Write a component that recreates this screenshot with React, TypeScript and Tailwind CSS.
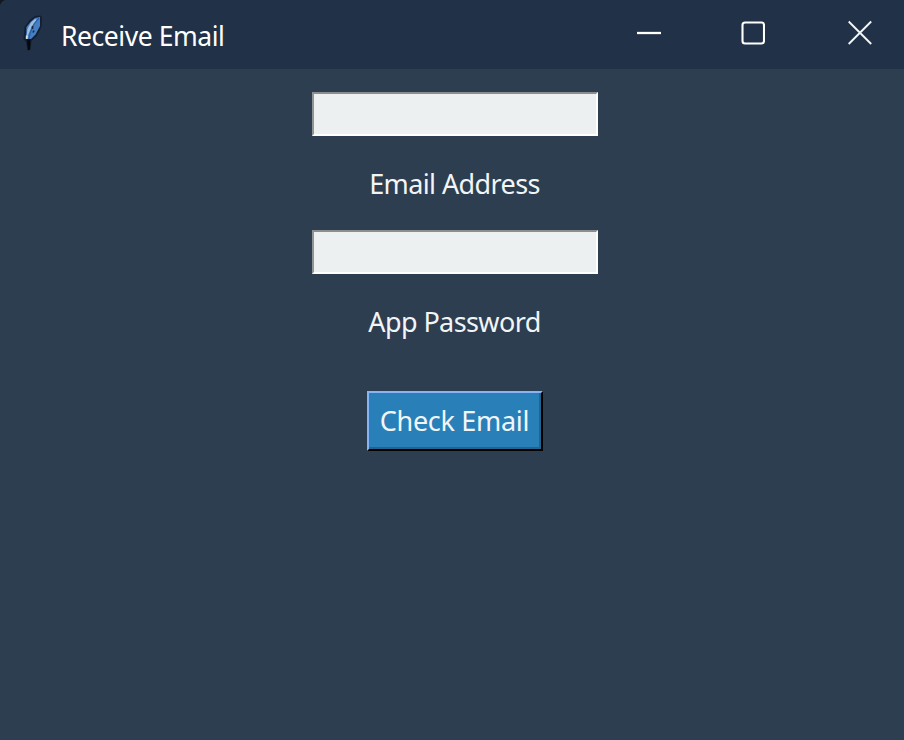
import React from "react";

function Feather() {
  return (
    <svg className="block h-[40px] w-[26px]" viewBox="0 0 26 40" aria-hidden="true">
      <path d="M20.5 2.5 22 4 21.5 14 17 23 11.5 28 10.5 36 7.5 38 6 29 3.5 26 4.5 14 9.5 7 15 3Z" fill="#10192a" opacity="0.75" />
      <path d="M20 4 20 13 15.5 21.5 11 26 6 25.500 6.500 14 10.500 9 15 5Z" fill="#4680c4" />
      <path d="M15 6 11 9.500 7.500 16 6.500 24 8.500 21 12 13 17 7Z" fill="#9dbfe0" />
      <path d="M19 5 14 11 10.5 19 9 25.5" fill="none" stroke="#2b62a5" strokeWidth="1.300" />
      <path d="M12.5 13v3M14 17.500 13 19.500" fill="none" stroke="#152743" strokeWidth="1.600" />
      <path d="M5.800 22.500h2.200l-.3 3.500H5.800Z" fill="#d5dbdf" />
      <path d="M7 26.500h3.500L10 37H8Z" fill="#05080d" />
    </svg>
  );
}

function TitleBar() {
  return (
    <header className="flex h-[69px] shrink-0 justify-between bg-[#213147]">
      <div className="flex pl-5">
        <div className="pt-[13px]">
          <Feather />
        </div>
        <h1 className="pl-[15px] pt-[18px] text-[26.500px] leading-[36px] tracking-[-0.45px] text-white">Receive Email</h1>
      </div>
      <div className="flex pr-[32px] pt-[20px]">
        <button className="mr-[80px] block h-[26px] w-6" aria-label="Minimize">
          <svg className="block" width="24" height="26" viewBox="0 0 24 26">
            <path d="M0 13h24" stroke="#fff" strokeWidth="2.300" />
          </svg>
        </button>
        <button className="mr-[83px] block h-[26px] w-6" aria-label="Maximize">
          <svg className="block" width="24" height="26" viewBox="0 0 24 26">
            <rect x="1.500" y="2.500" width="21.500" height="21" rx="2.500" fill="none" stroke="#fff" strokeWidth="2.100" />
          </svg>
        </button>
        <button className="block h-[26px] w-6" aria-label="Close">
          <svg className="block" width="24" height="26" viewBox="0 0 24 26">
            <path d="M.7 1.500 23.200 24M23.200 1.500 .7 24" stroke="#f4f5f7" strokeWidth="1.900" />
          </svg>
        </button>
      </div>
    </header>
  );
}

function Field({ type, label }: { type: string; label: string }) {
  return (
    <label className="flex h-[138px] flex-col items-center">
      <input
        type={type}
        className="block h-[44px] w-[286px] rounded-none border-2 border-b-white border-l-[#929596] border-r-white border-t-[#8b8d8e] bg-[#ecf0f1] outline-none"
      />
      <span className="mt-[29.500px] whitespace-nowrap pr-px text-[27px] leading-[36px] tracking-[-0.6px] text-[#f2f5f6]">
        {label}
      </span>
    </label>
  );
}

export default function App() {
  return (
    <div className="h-[740px] w-[904px] bg-[#111821] font-['Noto_Sans',sans-serif]">
      <div className="flex h-full flex-col overflow-hidden rounded-tl-[7px] bg-[#2d3e50]">
        <TitleBar />
        <main className="flex flex-1 flex-col items-center pl-[6px] pt-[23px]">
          <Field type="text" label="Email Address" />
          <Field type="password" label="App Password" />
          <button className="mt-[23px] flex h-[60px] w-[176px] items-center justify-center whitespace-nowrap border-2 border-b-black border-l-[#86b4f5] border-r-black border-t-[#86b4f5] bg-[#2980b9] pr-px text-[27px] leading-[36px] tracking-[-0.3px] text-[#f2f5f6] shadow-[inset_-2px_-2px_0_#20658f]">
            Check Email
          </button>
        </main>
      </div>
    </div>
  );
}
